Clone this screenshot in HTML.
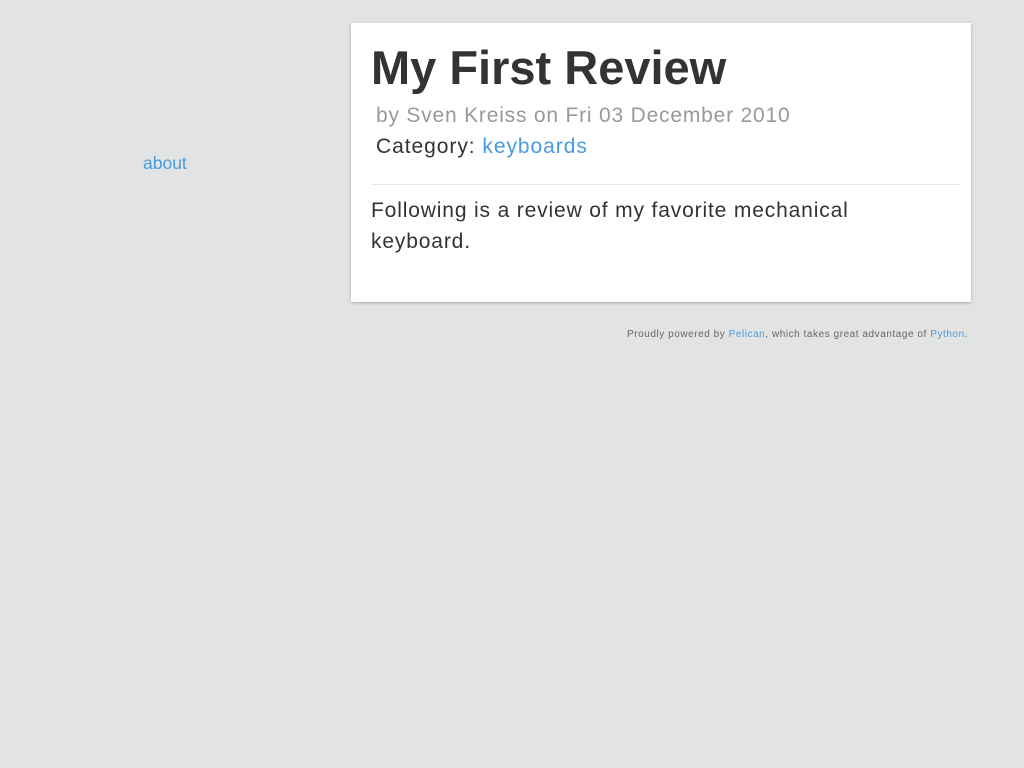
<!DOCTYPE html>
<html><head><style>
body{margin:0;width:1024px;height:768px;background:#e2e3e3;font-family:"Liberation Sans",sans-serif;position:relative;overflow:hidden}
a{color:#4a9ae0;text-decoration:none}
.about{position:absolute;left:143px;top:153px;font-size:17.5px;color:#4a9ae0}
.card{position:absolute;left:351px;top:23px;width:620px;height:279px;background:#fff;box-shadow:0 1px 3px rgba(0,0,0,.25)}
h1{position:absolute;left:20px;top:17px;margin:0;font-size:47px;font-weight:bold;color:#333;letter-spacing:0px;white-space:nowrap}
.by{position:absolute;left:25px;top:81px;font-size:21px;color:#999;white-space:nowrap;letter-spacing:0.8px}
.cat{position:absolute;left:25px;top:112px;font-size:21px;color:#333;white-space:nowrap;letter-spacing:0.95px}
hr{position:absolute;left:20px;top:161px;width:590px;margin:0;border:0;border-top:1px solid #e8e8e8}
.p{position:absolute;left:20px;top:172px;width:540px;font-size:21px;line-height:31px;color:#333;letter-spacing:0.85px}
.foot{position:absolute;right:56px;top:329px;font-size:10px;color:#666;white-space:nowrap;letter-spacing:0.55px}
</style></head><body>
<a class="about">about</a>
<div class="card">
<h1>My First Review</h1>
<div class="by">by Sven Kreiss on Fri 03 December 2010</div>
<div class="cat">Category: <a>keyboards</a></div>
<hr>
<div class="p">Following is a review of my favorite mechanical keyboard.</div>
</div>
<div class="foot">Proudly powered by <a>Pelican</a>, which takes great advantage of <a>Python</a>.</div>
</body></html>
